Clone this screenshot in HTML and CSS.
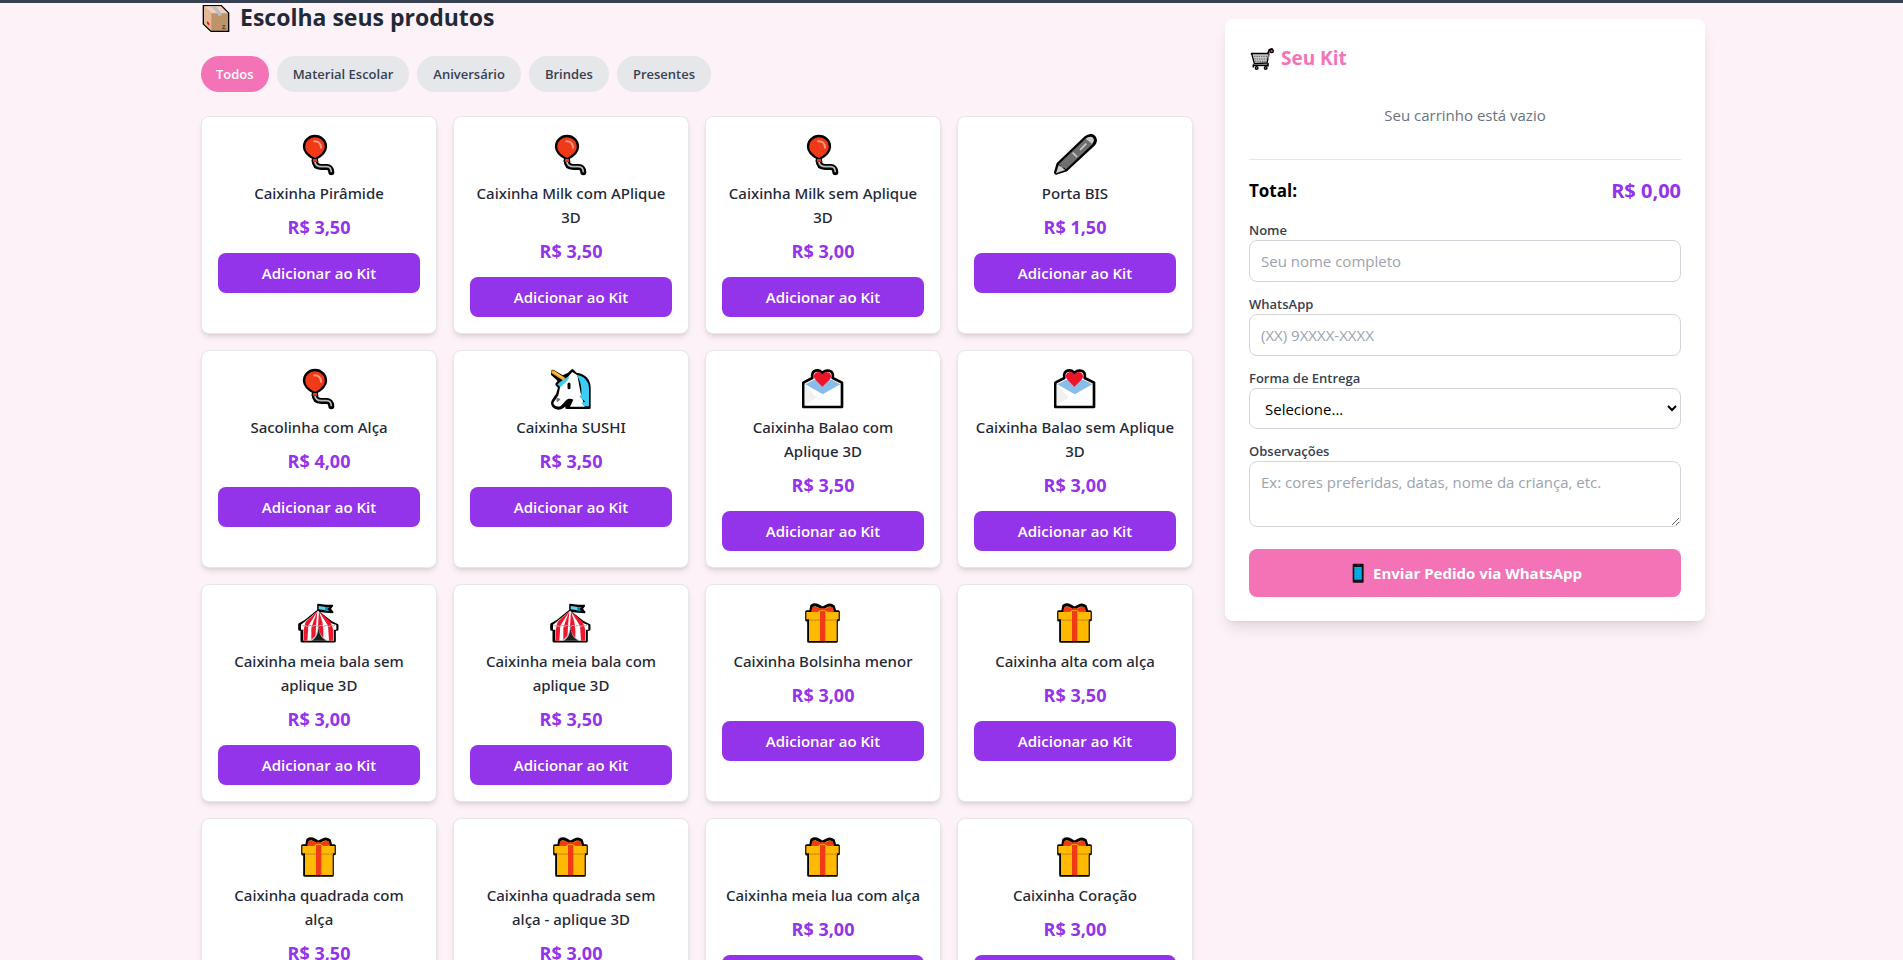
FILE: index.html
```html
<!DOCTYPE html>
<html lang="pt-BR">
<head>
<meta charset="utf-8">
<title>Escolha seus produtos</title>
<link rel="stylesheet" href="styles.css">
</head>
<body>
<svg class="sprite" aria-hidden="true">
  <symbol id="balloon" viewBox="21 24 132 132">
    <path d="M74 106c0 14 8 20 20 20h16c8 0 14 5 14 16" fill="none" stroke="#000" stroke-width="18" stroke-linecap="round"/>
    <path d="M74 106c1 13 8 19 20 19h16c9 0 14 6 14 17" fill="none" stroke="#b5bdb8" stroke-width="5"/>
    <path d="M67 108l4-12h8l4 12z" fill="#f03a17" stroke="#000" stroke-width="4"/>
    <path d="M75 103C58 94 42 81 42 65a33 32 0 0 1 66 0c0 16-16 29-33 38z" fill="#f03a17" stroke="#000" stroke-width="7"/>
    <path d="M70 102h10l2 8H68z" fill="#f03a17"/>
    <path d="M73 49c12-1 20 7 20 19" fill="none" stroke="#f59a8a" stroke-width="6" stroke-linecap="round"/>
  </symbol>
  <symbol id="pen" viewBox="24 24 132 132">
    <path d="M34 142l7-24 83-79c8-7 18-7 22-1 5 6 3 14-3 20l-81 75z" fill="#6f6f6f" stroke="#000" stroke-width="14" stroke-linejoin="round"/>
    <path d="M33 145l8-25 20 15z" fill="#ccc"/>
    <path d="M41 118l83-79 20 17-81 77z" fill="#6f6f6f"/>
    <path d="M122 41c7-7 18-8 22-3 5 6 3 12-3 18z" fill="#ccc"/>
    <path d="M83 83l13 13M105 75l19-19" stroke="#ccc" stroke-width="5"/>
  </symbol>
  <symbol id="unicorn" viewBox="27 21 132 132">
    <path d="M38 33L68 50 86 42 97 31 108 42C134 44 148 62 148 84V143H80L84 128 68 141C58 148 40 146 37 130 36 124 44 114 52 104L58 82 50 73 58 62 37 43z" fill="#000" stroke="#000" stroke-width="8" stroke-linejoin="round"/>
    <path d="M97 36L86 48 61 78 55 106 40 128C41 138 54 143 63 137L77 122C84 114 94 116 100 119L90 140H134L122 100 112 46z" fill="#fff"/>
    <path d="M52 73L72 57 89 47 82 62 61 82z" fill="#3ccbf4"/>
    <path d="M110 45C133 48 147 64 147 86V139H132L124 128 136 125 118 110 124 103C126 80 120 60 110 45z" fill="#3ccbf4"/>
    <path d="M39 36l31 20" stroke="#f5a62b" stroke-width="10" stroke-linecap="round"/>
    <path d="M43 37l25 16" stroke="#ffd16a" stroke-width="3"/>
    <path d="M87 72v11" stroke="#000" stroke-width="9" stroke-linecap="round"/>
    <path d="M52 116l6 2-6 5z" fill="#777" stroke="#777" stroke-width="5" stroke-linejoin="round"/>
  </symbol>
  <symbol id="letter" viewBox="33 21 132 132">
    <path d="M40 140V68l27-14c-4-27 21-27 30-14 10-13 36-12 31 14l28 14v73H40z" fill="#fff" stroke="#000" stroke-width="8" stroke-linejoin="round"/>
    <path d="M44 136V73l36 40z" fill="#f1f1f1"/>
    <path d="M46 73l25-13h55l25 13-53 30z" fill="#8abce9"/>
    <path d="M97 80L75 58c-12-18 13-31 22-14 10-17 35-4 23 14z" fill="#ee1428"/>
  </symbol>
  <symbol id="tent" viewBox="21 18 132 132">
    <path d="M82 50l42 33 17 8v12h-8v35H36v-35h-7V89l17-10z" fill="#fff" stroke="#000" stroke-width="9" stroke-linejoin="round"/>
    <path d="M84 29l24 3h19l-7 9 8 11-20-1-24-3z" fill="#000" stroke="#000" stroke-width="5" stroke-linejoin="round"/>
    <path d="M86 33l21 3v10l-21-3z" fill="#62d3f0"/>
    <path d="M98 41l9 6V36h12l-6 5 4 7h-12z" fill="#0f8fab"/>
    <path d="M84 47L33 89v15h7v33h92v-33h7V91l-17-8z" fill="#fff"/>
    <path d="M82 49L47 80l-6 24v33h11l3-45 24-38zM82 49L70 80l-6 20v37h12l2-44zM87 49l10 32 3 22v34h-12l-4-44zM87 49l35 31 8 24v33h-13l-3-45-24-38z" fill="#ee162d"/>
    <path d="M34 89q4 7 10 2 8 7 16 0 8 6 15 0 9 7 18 0 8 6 16 0 8 7 16 0 6 5 12-2" fill="none" stroke="#b9a6a6" stroke-width="3"/>
    <path d="M84 95c-2 20-9 33-28 42h60c-20-8-27-22-32-42z" fill="#bdbdbd"/>
    <path d="M85 96c0 20-6 34-20 41h45c-18-8-23-24-25-41z" fill="#202020"/>
  </symbol>
  <symbol id="gift" viewBox="18 18 132 132">
    <path d="M41 139V75h-6V50h12l3-17c10-7 18-3 32 7 15-10 23-14 33-6l5 16h10v24h-6v65z" fill="#ffb900" stroke="#000" stroke-width="9" stroke-linejoin="round"/>
    <path d="M34 51h97v22h-6v65H42V73h-8z" fill="#ffb900"/>
    <path d="M42 73h83v5H42z" fill="#dc9b08"/>
    <path d="M75 48h16v90H75z" fill="#f03a17"/>
    <path d="M48 50l4-14c8-4 14 0 22 5 5-3 12-3 17 0 10-6 15-8 22-4l5 13-20 1-9-5H76l-8 5z" fill="#f03a17"/>
  </symbol>
  <symbol id="parcel" viewBox="33 0 96 96">
    <path d="M40 14h54l22 22v55H63L40 69z" fill="#bd9468" stroke="#000" stroke-width="4"/>
    <path d="M42 16h51l21 21H64z" fill="#f2cdbb"/>
    <path d="M42 16l22 22v51L42 68z" fill="#e3b995"/>
    <path d="M63 16h13l18 21v7H84v-6z" fill="#b7bec6"/>
    <path d="M51 60l7 7v7l-7-6z" fill="#e81224"/>
    <path d="M97 74h8l-8 9h10" fill="none" stroke="#5d4933" stroke-width="3"/>
  </symbol>
  <symbol id="cart" viewBox="102 129 84 84">
    <path d="M110 158h49l4-11 8-3" fill="none" stroke="#000" stroke-width="6" stroke-linecap="round" stroke-linejoin="round"/>
    <path d="M110 158h52l-6 28-38 2z" fill="#c9c9c9" stroke="#000" stroke-width="4" stroke-linejoin="round"/>
    <path d="M117 166h40M118 174h37M120 181h34" stroke="#222" stroke-width="2" stroke-dasharray="4 3"/>
    <path d="M160 174l4-23 5-5" fill="none" stroke="#999" stroke-width="3"/>
    <path d="M114 193h45" stroke="#000" stroke-width="5"/>
    <circle cx="125" cy="201" r="4" fill="#999" stroke="#000" stroke-width="4"/>
    <circle cx="152" cy="201" r="4" fill="#999" stroke="#000" stroke-width="4"/>
    <path d="M115 192v5M159 188v7" stroke="#000" stroke-width="5" stroke-linecap="round"/>
    <circle cx="170" cy="150" r="5" fill="#ff5a43" stroke="#000" stroke-width="4"/>
  </symbol>
  <symbol id="phone" viewBox="388 400 60 60">
    <rect x="402" y="402" width="33" height="57" rx="3" fill="#111"/>
    <path d="M407 412h22v38h-22z" fill="#00b4f0"/>
    <path d="M414 412v38M423 412v38M407 419h22M407 428h22M407 437h22M407 444h22" stroke="#0a86ad" stroke-width="1"/>
    <path d="M414 406h10" stroke="#444" stroke-width="2"/>
  </symbol>
</svg>
<header class="topbar"></header>
<div class="container">
  <main class="products">
    <h2 class="title"><svg class="title-icon" aria-hidden="true"><use href="#parcel"/></svg>Escolha seus produtos</h2>
    <nav class="filters">
      <button class="pill pill-active" type="button">Todos</button>
      <button class="pill" type="button">Material Escolar</button>
      <button class="pill" type="button">Aniversário</button>
      <button class="pill" type="button">Brindes</button>
      <button class="pill" type="button">Presentes</button>
    </nav>
    <div class="grid">
      <article class="card"><svg class="card-icon" aria-hidden="true"><use href="#balloon"/></svg><h3 class="name">Caixinha Pirâmide</h3><p class="price">R$ 3,50</p><button class="add" type="button">Adicionar ao Kit</button></article>
      <article class="card"><svg class="card-icon" aria-hidden="true"><use href="#balloon"/></svg><h3 class="name">Caixinha Milk com APlique 3D</h3><p class="price">R$ 3,50</p><button class="add" type="button">Adicionar ao Kit</button></article>
      <article class="card"><svg class="card-icon" aria-hidden="true"><use href="#balloon"/></svg><h3 class="name">Caixinha Milk sem Aplique 3D</h3><p class="price">R$ 3,00</p><button class="add" type="button">Adicionar ao Kit</button></article>
      <article class="card"><svg class="card-icon" aria-hidden="true"><use href="#pen"/></svg><h3 class="name">Porta BIS</h3><p class="price">R$ 1,50</p><button class="add" type="button">Adicionar ao Kit</button></article>
      <article class="card"><svg class="card-icon" aria-hidden="true"><use href="#balloon"/></svg><h3 class="name">Sacolinha com Alça</h3><p class="price">R$ 4,00</p><button class="add" type="button">Adicionar ao Kit</button></article>
      <article class="card"><svg class="card-icon" aria-hidden="true"><use href="#unicorn"/></svg><h3 class="name">Caixinha SUSHI</h3><p class="price">R$ 3,50</p><button class="add" type="button">Adicionar ao Kit</button></article>
      <article class="card"><svg class="card-icon" aria-hidden="true"><use href="#letter"/></svg><h3 class="name">Caixinha Balao com<br>Aplique 3D</h3><p class="price">R$ 3,50</p><button class="add" type="button">Adicionar ao Kit</button></article>
      <article class="card"><svg class="card-icon" aria-hidden="true"><use href="#letter"/></svg><h3 class="name">Caixinha Balao sem Aplique 3D</h3><p class="price">R$ 3,00</p><button class="add" type="button">Adicionar ao Kit</button></article>
      <article class="card"><svg class="card-icon" aria-hidden="true"><use href="#tent"/></svg><h3 class="name">Caixinha meia bala sem aplique 3D</h3><p class="price">R$ 3,00</p><button class="add" type="button">Adicionar ao Kit</button></article>
      <article class="card"><svg class="card-icon" aria-hidden="true"><use href="#tent"/></svg><h3 class="name">Caixinha meia bala com aplique 3D</h3><p class="price">R$ 3,50</p><button class="add" type="button">Adicionar ao Kit</button></article>
      <article class="card"><svg class="card-icon" aria-hidden="true"><use href="#gift"/></svg><h3 class="name">Caixinha Bolsinha menor</h3><p class="price">R$ 3,00</p><button class="add" type="button">Adicionar ao Kit</button></article>
      <article class="card"><svg class="card-icon" aria-hidden="true"><use href="#gift"/></svg><h3 class="name">Caixinha alta com alça</h3><p class="price">R$ 3,50</p><button class="add" type="button">Adicionar ao Kit</button></article>
      <article class="card"><svg class="card-icon" aria-hidden="true"><use href="#gift"/></svg><h3 class="name">Caixinha quadrada com<br>alça</h3><p class="price">R$ 3,50</p><button class="add" type="button">Adicionar ao Kit</button></article>
      <article class="card"><svg class="card-icon" aria-hidden="true"><use href="#gift"/></svg><h3 class="name">Caixinha quadrada sem<br>alça - aplique 3D</h3><p class="price">R$ 3,00</p><button class="add" type="button">Adicionar ao Kit</button></article>
      <article class="card"><svg class="card-icon" aria-hidden="true"><use href="#gift"/></svg><h3 class="name">Caixinha meia lua com alça</h3><p class="price">R$ 3,00</p><button class="add" type="button">Adicionar ao Kit</button></article>
      <article class="card"><svg class="card-icon" aria-hidden="true"><use href="#gift"/></svg><h3 class="name">Caixinha Coração</h3><p class="price">R$ 3,00</p><button class="add" type="button">Adicionar ao Kit</button></article>
    </div>
  </main>
  <aside class="kit">
    <h2 class="kit-title"><svg class="kit-icon" aria-hidden="true"><use href="#cart"/></svg>Seu Kit</h2>
    <p class="empty">Seu carrinho está vazio</p>
    <div class="total"><span class="total-label">Total:</span><span class="total-value">R$ 0,00</span></div>
    <form class="form">
      <div class="field"><label class="label" for="nome">Nome</label><input class="control" id="nome" type="text" placeholder="Seu nome completo"></div>
      <div class="field"><label class="label" for="whats">WhatsApp</label><input class="control" id="whats" type="tel" placeholder="(XX) 9XXXX-XXXX"></div>
      <div class="field"><label class="label" for="entrega">Forma de Entrega</label><select class="control select" id="entrega"><option>Selecione...</option><option>Retirada</option></select></div>
      <div class="field"><label class="label" for="obs">Observações</label><textarea class="control area" id="obs" rows="2" placeholder="Ex: cores preferidas, datas, nome da criança, etc."></textarea></div>
      <button class="send" type="button"><svg class="send-icon" aria-hidden="true"><use href="#phone"/></svg>Enviar Pedido via WhatsApp</button>
    </form>
  </aside>
</div>
</body>
</html>
```
FILE: styles.css
```css
*, *::before, *::after { box-sizing: border-box; }
body {
  margin: 0;
  padding-left: 3px;
  background: #fdf2f8;
  font-family: "Segoe UI", "Open Sans", "Noto Sans", sans-serif;
  font-size: 15px;
  line-height: 24px;
  color: #000;
}
h2, h3, p { margin: 0; }
button, input, select, textarea { font: inherit; }
button { border: 0; cursor: pointer; }
.sprite { position: absolute; width: 0; height: 0; }
.topbar {
  position: fixed;
  top: 0;
  left: 0;
  right: 0;
  height: 3px;
  background: #374151;
  z-index: 2;
}
.container {
  display: grid;
  grid-template-columns: repeat(3, minmax(0, 1fr));
  gap: 32px;
  align-items: start;
  max-width: 1536px;
  margin: 0 auto;
  padding: 0 16px 32px;
}
.products { grid-column: span 2; }
.title {
  display: flex;
  align-items: center;
  gap: 7px;
  padding-top: 1px;
  margin-bottom: 23px;
  font-size: 23px;
  line-height: 32px;
  font-weight: 700;
  color: #1f2937;
}
.title-icon { width: 32px; height: 32px; }
.filters { display: flex; flex-wrap: wrap; gap: 8px; margin-bottom: 24px; }
.pill {
  padding: 8px 16px;
  border-radius: 18px;
  background: #e5e7eb;
  color: #374151;
  font-size: 13px;
  line-height: 20px;
  font-weight: 600;
}
.pill-active { padding: 8px 15px; background: #f472b6; color: #fff; }
.grid { display: grid; grid-template-columns: repeat(4, minmax(0, 1fr)); gap: 16px; }
.card {
  display: flex;
  flex-direction: column;
  align-items: center;
  padding: 16px;
  border: 1px solid #e5e7eb;
  border-radius: 8px;
  background: #fff;
  text-align: center;
  box-shadow: 0 4px 6px -1px rgba(0, 0, 0, .1), 0 2px 4px -2px rgba(0, 0, 0, .1);
}
.card-icon { width: 44px; height: 44px; margin-bottom: 4px; }
.name {
  font-family: "Segoe UI", "Noto Sans", "Open Sans", sans-serif;
  font-size: 15px;
  font-weight: 500;
  color: #1f2937;
}
.price { margin: 8px 0 12px; font-size: 18px; line-height: 28px; font-weight: 700; color: #9333ea; }
.add {
  width: 100%;
  padding: 8px 16px;
  border-radius: 8px;
  background: #9333ea;
  color: #fff;
  font-weight: 600;
}
.kit {
  margin-top: 19px;
  padding: 24px;
  border-radius: 8px;
  background: #fff;
  box-shadow: 0 10px 15px -3px rgba(0, 0, 0, .1), 0 4px 6px -4px rgba(0, 0, 0, .1);
}
.kit-title {
  display: flex;
  align-items: center;
  gap: 4px;
  padding-top: 1px;
  margin-bottom: 15px;
  font-size: 19px;
  line-height: 28px;
  font-weight: 700;
  color: #f472b6;
}
.kit-icon { width: 28px; height: 28px; }
.empty { padding: 16px 0 32px; text-align: center; color: #6b7280; }
.total {
  display: flex;
  justify-content: space-between;
  align-items: center;
  padding: 17px 0 15px;
  border-top: 1px solid #e5e7eb;
  line-height: 28px;
  font-weight: 700;
}
.total-label { font-size: 17px; }
.total-value { font-size: 20px; color: #9333ea; }
.form { display: flex; flex-direction: column; gap: 12px; }
.field { display: flex; flex-direction: column; }
.label { font-size: 13px; line-height: 20px; font-weight: 600; color: #374151; }
.control {
  width: 100%;
  height: 42px;
  padding: 8px 11px;
  border: 1px solid #d1d5db;
  border-radius: 8px;
  background: #fff;
  color: #000;
}
.control::placeholder { color: #9ca3af; opacity: 1; }
.select { height: 41px; }
.area { height: 66px; resize: vertical; }
.send {
  display: flex;
  align-items: center;
  justify-content: center;
  gap: 5px;
  margin-top: 10px;
  padding: 12px;
  border-radius: 8px;
  background: #f472b6;
  color: #fff;
  font-weight: 700;
}
.send-icon { width: 20px; height: 20px; }
```
